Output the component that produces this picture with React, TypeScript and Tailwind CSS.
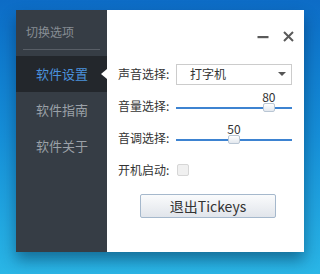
import { useState } from 'react';

const font = { fontFamily: '"Noto Sans CJK SC", "Noto Sans", sans-serif' };

const navItems = ['软件设置', '软件指南', '软件关于'];

// 滑块
const Slider = ({ value }: { value: number }) => (
  <div className="relative h-full flex-1">
    <div className="absolute left-0 right-0 top-[17px] h-[2px] bg-[#3d83d1]" />
    <div
      className="absolute top-[13px] h-[9px] w-[12px] -translate-x-1/2 rounded-[2px] border border-[#b9c6d4] bg-gradient-to-b from-white to-[#e3e8ee]"
      style={{ left: `${value}%` }}
    />
    <span
      className="absolute top-[0px] -translate-x-1/2 text-[12px] leading-[14px] text-[#333]"
      style={{ left: `${value}%` }}
    >
      {value}
    </span>
  </div>
);

const App = () => {
  const [active, setActive] = useState(0);

  return (
    <div
      className="h-[274px] w-[320px] overflow-hidden bg-gradient-to-b from-[#0d6cc6] via-[#168fd8] to-[#2ab6e6] pl-[16px] pt-[10px]"
      style={font}
    >
      <div className="flex h-[242px] w-[288px] shadow-[0_8px_14px_rgba(0,30,60,0.45)]">
        {/* Sidebar */}
        <div className="flex w-[91px] flex-col bg-[#363d45]">
          <div className="pl-[10px] pt-[14px] text-[12px] leading-[16px] text-[#878d94]">切换选项</div>
          <div className="mx-[7px] mt-[9px] h-[1px] bg-[#585e66]" />
          <div className="mt-[6px] flex flex-col">
            {navItems.map((item, i) => (
              <div
                key={item}
                onClick={() => setActive(i)}
                className={`relative flex h-[36px] items-center pl-[20px] text-[13px] ${
                  active === i ? 'bg-[#23272c] text-[#4b92dc]' : 'text-[#9ba1a8]'
                }`}
              >
                {item}
                {active === i && (
                  <div className="absolute right-0 top-[13px] h-0 w-0 border-y-[5px] border-r-[6px] border-y-transparent border-r-white" />
                )}
              </div>
            ))}
          </div>
        </div>

        {/* Content */}
        <div className="flex flex-1 flex-col bg-white">
          <div className="flex h-[48px] items-start justify-end gap-[14px] pr-[10px] pt-[21px]">
            <svg width="12" height="12" viewBox="0 0 12 12">
              <rect x="0.5" y="5" width="11" height="2.2" fill="#5a5a5a" />
            </svg>
            <svg width="11" height="11" viewBox="0 0 11 11">
              <path d="M1 1L10 10M10 1L1 10" stroke="#5a5a5a" strokeWidth="2" />
            </svg>
          </div>

          <div className="flex flex-col pl-[11px] pr-[12px] text-[12px] text-[#333]">
            <div className="flex h-[32px] items-center">
              <span className="w-[58px]">声音选择:</span>
              <div className="flex h-[21px] flex-1 items-center justify-between border border-[#cccccc] pl-[13px] pr-[5px]">
                <span className="text-[12px]">打字机</span>
                <div className="h-0 w-0 border-x-[4px] border-t-[4px] border-x-transparent border-t-[#555]" />
              </div>
            </div>
            <div className="flex h-[32px] items-center">
              <span className="w-[58px]">音量选择:</span>
              <Slider value={80} />
            </div>
            <div className="flex h-[32px] items-center">
              <span className="w-[58px]">音调选择:</span>
              <Slider value={50} />
            </div>
            <div className="flex h-[32px] items-center">
              <span className="w-[59px]">开机启动:</span>
              <div className="h-[12px] w-[12px] rounded-[2px] border border-[#d6d6d6] bg-[#f0f0f0]" />
            </div>
          </div>

          <div className="mt-[8px] pl-[33px]">
            <button className="flex h-[24px] w-[136px] items-center justify-center rounded-[2px] border border-[#a5b8cc] bg-gradient-to-b from-[#fafbfc] to-[#e1e5eb] text-[14px] text-[#333]">
              退出Tickeys
            </button>
          </div>
        </div>
      </div>
    </div>
  );
};

export default App;
